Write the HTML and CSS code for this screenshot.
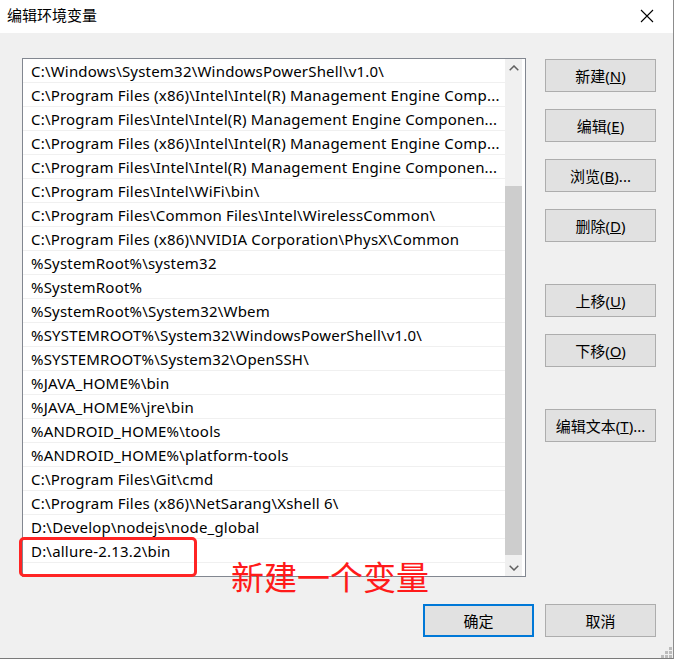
FILE: index.html
```html
<!DOCTYPE html>
<html lang="zh-CN">
<head>
<meta charset="utf-8">
<title>编辑环境变量</title>
<link rel="stylesheet" href="styles.css">
</head>
<body>
<div class="window">
  <div class="titlebar">
    <span class="title">编辑环境变量</span>
    <span class="close">
      <svg width="14" height="14" viewBox="0 0 14 14"><path d="M1 1 L13 13 M13 1 L1 13" stroke="#000" stroke-width="1.1" fill="none"/></svg>
    </span>
  </div>
  <div class="content">
    <div class="main">
      <div class="listbox">
        <div class="rows">
          <div class="row">C:\Windows\System32\WindowsPowerShell\v1.0\</div>
          <div class="row">C:\Program Files (x86)\Intel\Intel(R) Management Engine Comp...</div>
          <div class="row">C:\Program Files\Intel\Intel(R) Management Engine Componen...</div>
          <div class="row">C:\Program Files (x86)\Intel\Intel(R) Management Engine Comp...</div>
          <div class="row">C:\Program Files\Intel\Intel(R) Management Engine Componen...</div>
          <div class="row">C:\Program Files\Intel\WiFi\bin\</div>
          <div class="row">C:\Program Files\Common Files\Intel\WirelessCommon\</div>
          <div class="row">C:\Program Files (x86)\NVIDIA Corporation\PhysX\Common</div>
          <div class="row">%SystemRoot%\system32</div>
          <div class="row">%SystemRoot%</div>
          <div class="row">%SystemRoot%\System32\Wbem</div>
          <div class="row">%SYSTEMROOT%\System32\WindowsPowerShell\v1.0\</div>
          <div class="row">%SYSTEMROOT%\System32\OpenSSH\</div>
          <div class="row">%JAVA_HOME%\bin</div>
          <div class="row">%JAVA_HOME%\jre\bin</div>
          <div class="row">%ANDROID_HOME%\tools</div>
          <div class="row">%ANDROID_HOME%\platform-tools</div>
          <div class="row">C:\Program Files\Git\cmd</div>
          <div class="row">C:\Program Files (x86)\NetSarang\Xshell 6\</div>
          <div class="row">D:\Develop\nodejs\node_global</div>
          <div class="row">D:\allure-2.13.2\bin</div>
        </div>
        <div class="scrollbar">
          <div class="arrow">
            <svg width="10" height="6" viewBox="0 0 10 6"><path d="M0.7 5.3 L5 1 L9.3 5.3" stroke="#606060" stroke-width="1.5" fill="none"/></svg>
          </div>
          <div class="track"><div class="thumb"></div></div>
          <div class="arrow">
            <svg width="10" height="6" viewBox="0 0 10 6"><path d="M0.7 0.7 L5 5 L9.3 0.7" stroke="#606060" stroke-width="1.5" fill="none"/></svg>
          </div>
        </div>
      </div>
      <div class="buttons">
        <button class="btn">新建(<u>N</u>)</button>
        <button class="btn">编辑(<u>E</u>)</button>
        <button class="btn">浏览(<u>B</u>)...</button>
        <button class="btn">删除(<u>D</u>)</button>
        <button class="btn gap-before">上移(<u>U</u>)</button>
        <button class="btn">下移(<u>O</u>)</button>
        <button class="btn gap-before">编辑文本(<u>T</u>)...</button>
      </div>
    </div>
    <div class="footer">
      <button class="btn ok">确定</button>
      <button class="btn">取消</button>
    </div>
    <div class="highlight"></div>
    <div class="note">新建一个变量</div>
    <svg class="grip" width="12" height="12" viewBox="0 0 12 12">
      <rect x="9" y="1" width="3" height="3" fill="#bcbcbc"/>
      <rect x="5" y="5" width="3" height="3" fill="#bcbcbc"/>
      <rect x="9" y="5" width="3" height="3" fill="#bcbcbc"/>
      <rect x="1" y="9" width="3" height="3" fill="#bcbcbc"/>
      <rect x="5" y="9" width="3" height="3" fill="#bcbcbc"/>
      <rect x="9" y="9" width="3" height="3" fill="#bcbcbc"/>
    </svg>
  </div>
</div>
</body>
</html>
```

FILE: styles.css
```css
* { box-sizing: border-box; }

html, body {
  margin: 0;
  padding: 0;
  background: #ffffff;
}

body {
  font-family: "Noto Sans", "Noto Sans CJK SC", sans-serif;
  font-size: 15px;
  color: #000;
}

.window {
  width: 674px;
  height: 659px;
  border-right: 1px solid #8c8c8c;
  border-bottom: 1px solid #7a7a7a;
  display: flex;
  flex-direction: column;
}

.titlebar {
  height: 33px;
  flex: none;
  background: #fff;
  display: flex;
  align-items: flex-start;
  justify-content: space-between;
  padding: 5px 0 0 7px;
}

.title {
  font-family: "Noto Sans CJK SC", sans-serif;
  font-size: 15px;
  line-height: 20px;
}

.close {
  width: 46px;
  height: 24px;
  display: flex;
  align-items: center;
  justify-content: center;
  margin-top: -1px;
  margin-right: 3px;
}

.content {
  position: relative;
  flex: 1;
  background: #f0f0f0;
  padding: 25px 0 0 22px;
}

.main {
  display: flex;
  align-items: flex-start;
}

.listbox {
  width: 504px;
  height: 519px;
  border: 1px solid #828790;
  background: #fff;
  display: flex;
}

.rows {
  flex: 1;
  min-width: 0;
}

.row {
  height: 24px;
  border-bottom: 1px solid #f0f0f0;
  padding: 2px 0 0 8px;
  line-height: 21px;
  letter-spacing: 0.2px;
  white-space: nowrap;
  overflow: hidden;
}

.scrollbar {
  width: 17px;
  margin-right: 3px;
  background: #f0f0f0;
  display: flex;
  flex-direction: column;
}

.arrow {
  height: 17px;
  display: flex;
  align-items: center;
  justify-content: center;
}

.track {
  flex: 1;
  display: flex;
  flex-direction: column;
}

.thumb {
  margin-top: 110px;
  height: 369px;
  background: #cdcdcd;
}

.buttons {
  margin-left: 19px;
  padding-top: 1px;
  display: flex;
  flex-direction: column;
  gap: 17px;
}

.btn {
  width: 111px;
  height: 33px;
  background: #e1e1e1;
  border: 1px solid #adadad;
  font-family: "Noto Sans", "Noto Sans CJK SC", sans-serif;
  font-size: 15px;
  color: #000;
  padding: 0;
  margin: 0;
  border-radius: 0;
}

.gap-before {
  margin-top: 25px;
}

.footer {
  width: 634px;
  margin-top: 27px;
  display: flex;
  justify-content: flex-end;
  gap: 11px;
}

.ok {
  border: 2px solid #0078d7;
}

.highlight {
  position: absolute;
  left: 19px;
  top: 504px;
  width: 178px;
  height: 40px;
  border: 3px solid #ff2424;
  border-radius: 5px;
}

.note {
  position: absolute;
  left: 231px;
  top: 527px;
  font-family: "Noto Sans CJK SC", sans-serif;
  font-size: 33px;
  line-height: 33px;
  color: #ff1a1a;
}

.grip {
  position: absolute;
  right: 1px;
  bottom: 0;
}
```
